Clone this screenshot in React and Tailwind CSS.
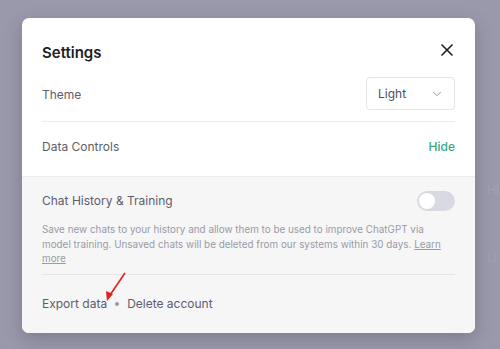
import { X, ChevronDown } from 'lucide-react';

export default function App() {
  return (
    <div className="relative h-[349px] w-[500px] overflow-hidden bg-[#9a99ab] font-['Inter',sans-serif]">
      {/* page behind the overlay */}
      <div className="absolute left-[487px] top-[181px] text-[12px] text-[#a3a2b3]">Hi</div>
      <div className="absolute left-[487px] top-[249px] text-[12px] text-[#a3a2b3]">Li</div>

      <div className="absolute left-[22px] top-[18px] flex h-[315px] w-[453px] flex-col overflow-hidden rounded-[7px] bg-white shadow-[0_6px_18px_rgba(40,40,60,0.25)]">
        <div className="px-5 pb-[6px]">
          <div className="mb-[15px] mt-[26px] flex h-[18px] items-center justify-between">
            <h2 className="text-[15px] font-semibold text-[#202123]">Settings</h2>
            <X size={20} strokeWidth={2} className="mr-[-2px] mt-[-6px] text-[#202123]" />
          </div>

          <div className="mb-[11px] flex h-[33px] items-center justify-between">
            <span className="mt-[2px] text-[12px] text-[#5d5d6b]">Theme</span>
            <button
              type="button"
              className="flex h-[33px] w-[89px] items-center justify-between rounded-[4px] border border-[#e5e5ea] pl-[11px] pr-[10px] text-[12px] text-[#4d4d5a]"
            >
              Light
              <ChevronDown size={14} strokeWidth={1.6} className="text-[#8e8ea0]" />
            </button>
          </div>
          <div className="h-px bg-[#ececf1]" />

          <div className="flex h-[48px] items-center justify-between">
            <span className="mt-[2px] text-[12px] text-[#5d5d6b]">Data Controls</span>
            <span className="mt-[2px] text-[12px] font-medium text-[#3ca683]">Hide</span>
          </div>
        </div>

        <div className="flex-1 border-t border-[#ececef] bg-[#f6f6f7] px-5 pt-[14px]">
          <div className="flex h-[20px] items-center justify-between">
            <span className="text-[12px] text-[#5d5d6b]">Chat History &amp; Training</span>
            <div className="flex h-[20px] w-[38px] items-center rounded-full bg-[#d9d9e3] px-[2px]">
              <div className="h-[16px] w-[16px] rounded-full bg-white" />
            </div>
          </div>
          <p className="mt-[11px] border-b border-[#e3e3e8] pb-[8px] text-[9.9px] leading-[14.5px] text-[#9a9aa6]">
            Save new chats to your history and allow them to be used to improve ChatGPT via model training. Unsaved chats will be deleted from our systems within 30 days.{' '}
            <span className="underline">Learn more</span>
          </p>
          <div className="flex h-[58px] items-center gap-[8px] text-[12px] text-[#5d5d6b]">
            <span>Export data</span>
            <span className="h-[4px] w-[4px] rounded-full bg-[#9a9aa6]" />
            <span>Delete account</span>
          </div>
        </div>
      </div>

      {/* annotation arrow */}
      <svg className="absolute left-0 top-0" width="500" height="349">
        <line x1="125" y1="273" x2="110" y2="295" stroke="#e0201d" strokeWidth="1.6" />
        <polygon points="107,301 106,291 113,294" fill="#e0201d" />
      </svg>
    </div>
  );
}
